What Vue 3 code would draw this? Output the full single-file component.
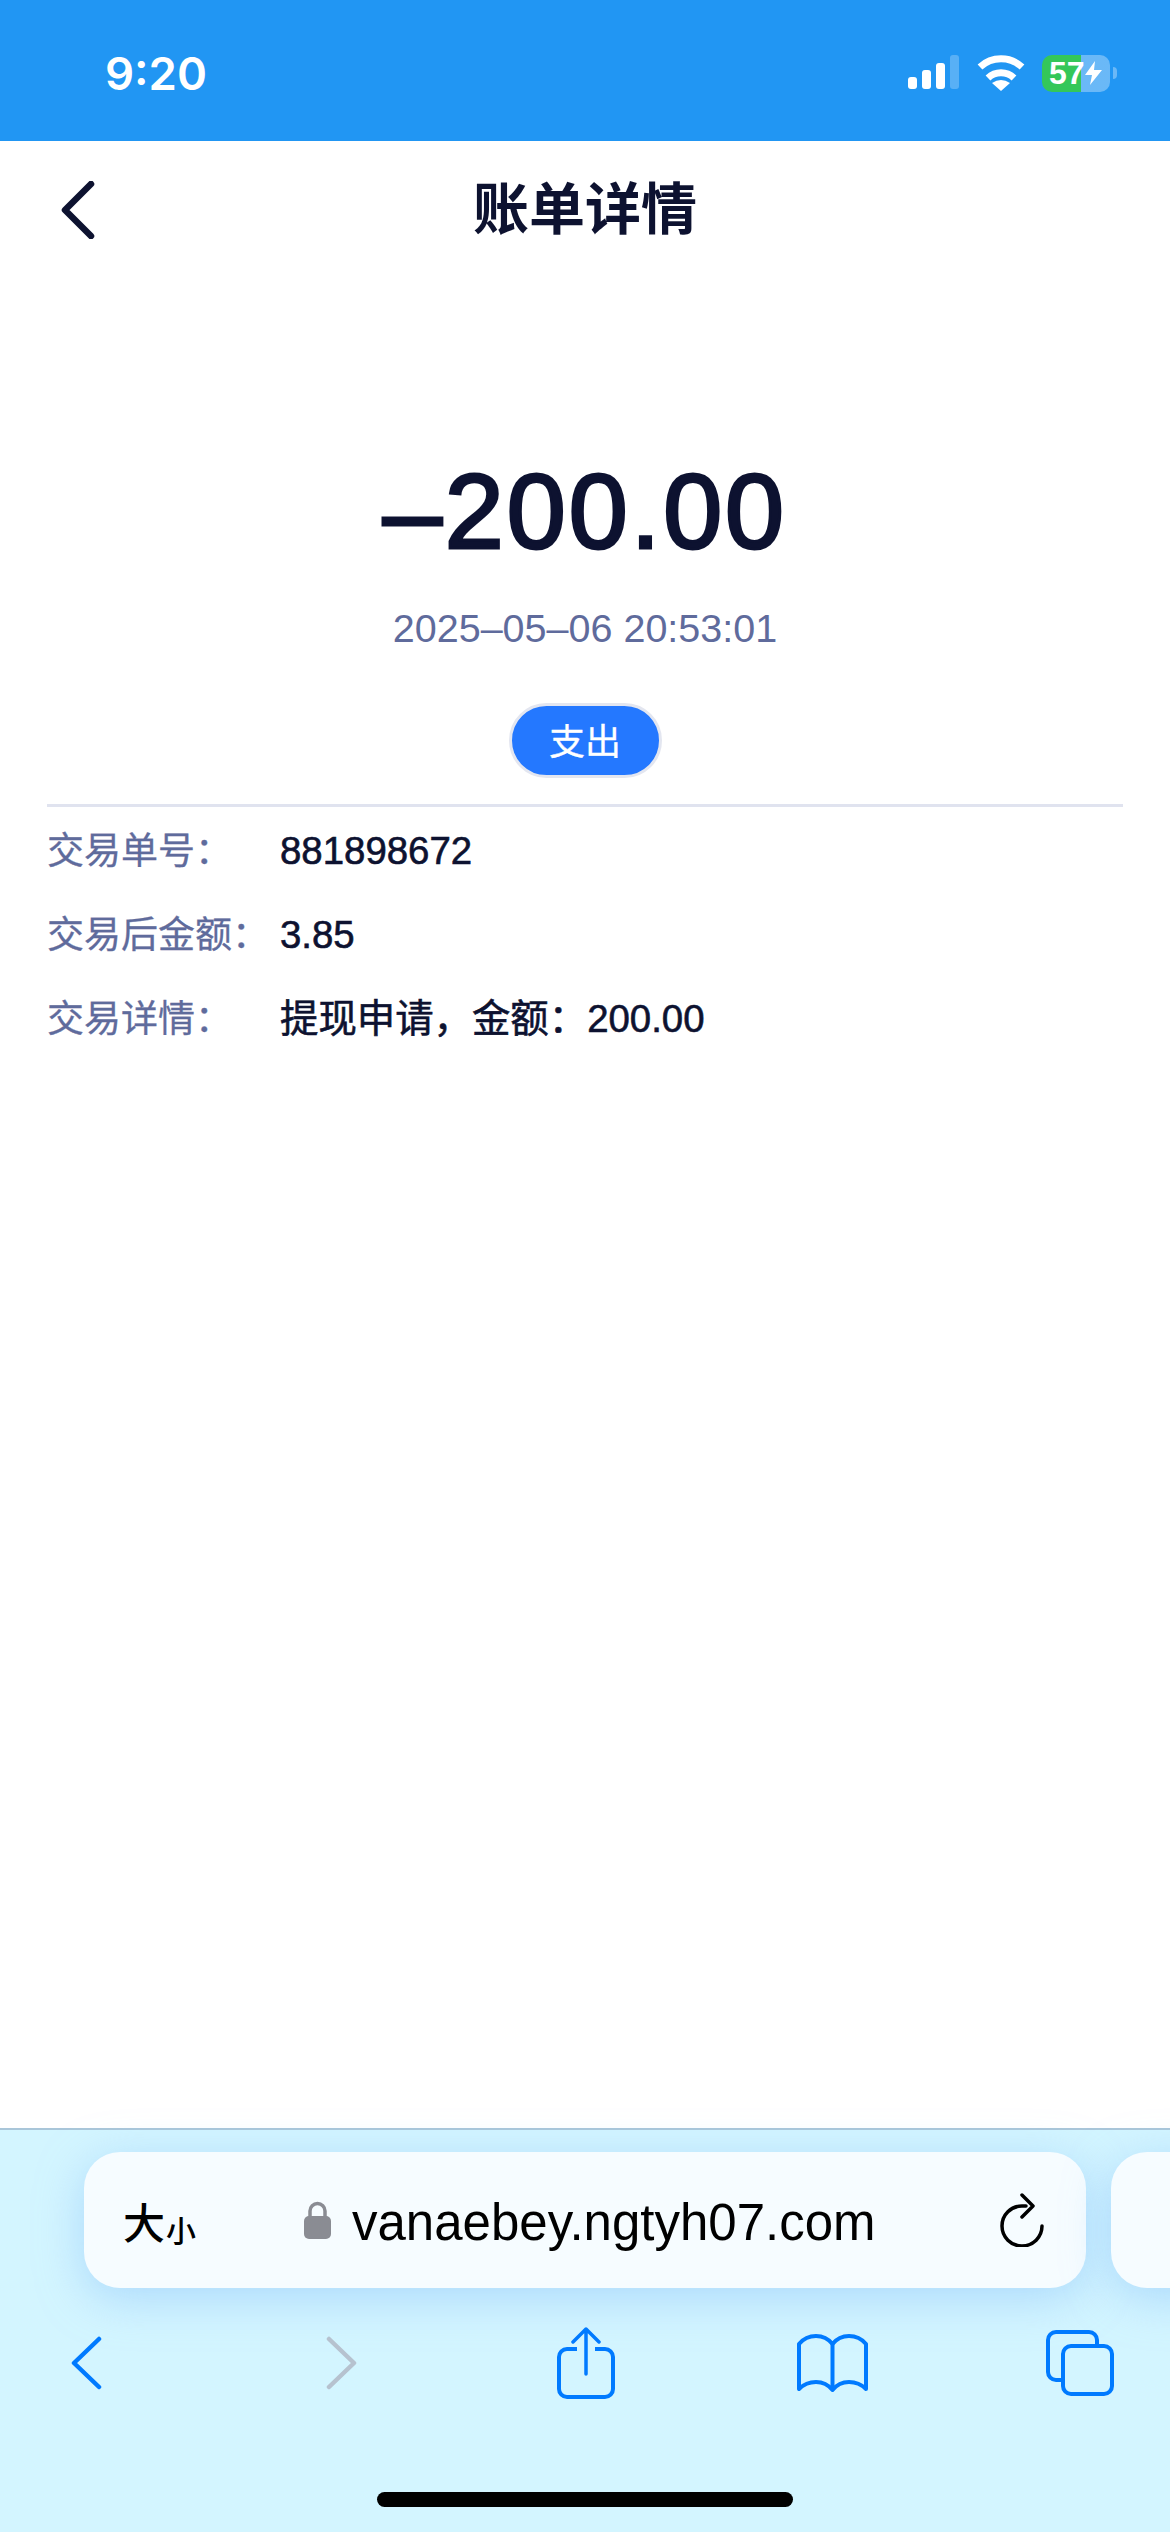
<script setup>
const rows = [
  { label: '交易单号：', value: '881898672' },
  { label: '交易后金额：', value: '3.85' },
  { label: '交易详情：', value: '提现申请，金额：200.00' }
]
</script>

<template>
  <div class="page">
    <div class="status-bar">
      <span class="time">9:20</span>
      <div class="status-icons">
        <svg class="signal" width="51" height="34" viewBox="0 0 51 34">
          <rect x="0" y="22" width="9" height="12" rx="3" fill="#fff" />
          <rect x="14" y="15" width="9" height="19" rx="3" fill="#fff" />
          <rect x="28" y="8" width="9" height="26" rx="3" fill="#fff" />
          <rect x="42" y="0" width="9" height="34" rx="3" fill="#fff" fill-opacity="0.25" />
        </svg>
        <svg class="wifi" width="48" height="36" viewBox="0 0 48 36">
          <path d="M3 12A31 31 0 0 1 45 12" fill="none" stroke="#fff" stroke-width="7" />
          <path d="M11 23A19 19 0 0 1 37 23" fill="none" stroke="#fff" stroke-width="7" />
          <path d="M15 28Q24 22 33 28L24 36Z" fill="#fff" />
        </svg>
        <div class="battery">
          <span class="battery-num">57</span>
          <svg width="17" height="24" viewBox="0 0 17 24">
            <path d="M10 0L0 14H7L5 24L17 9H9Z" fill="#fff" />
          </svg>
        </div>
        <div class="battery-nub"></div>
      </div>
    </div>

    <div class="nav">
      <svg class="nav-back" width="36" height="58" viewBox="0 0 36 58">
        <path d="M31 3L5 29L31 55" fill="none" stroke="#0d1230" stroke-width="6.500" stroke-linecap="round" stroke-linejoin="round" />
      </svg>
      <h1 class="nav-title">账单详情</h1>
    </div>

    <div class="summary">
      <div class="amount">–200.00</div>
      <div class="date">2025–05–06 20:53:01</div>
      <div class="pill">支出</div>
    </div>

    <div class="details">
      <div class="row" v-for="row in rows" :key="row.label">
        <span class="row-label">{{ row.label }}</span>
        <span class="row-value">{{ row.value }}</span>
      </div>
    </div>

    <div class="spacer"></div>

    <div class="browser">
      <div class="url-row">
        <div class="url-bar">
          <div class="text-size"><span class="big">大</span><span class="small">小</span></div>
          <svg class="lock" width="27" height="38" viewBox="0 0 27 38">
            <path d="M6 17V10a7.5 7.5 0 0 1 15 0V17" fill="none" stroke="#8a8c93" stroke-width="3.500" />
            <rect x="0" y="15" width="27" height="23" rx="5" fill="#8a8c93" />
          </svg>
          <span class="url">vanaebey.ngtyh07.com</span>
          <svg class="reload" width="46" height="54" viewBox="0 0 46 54">
            <path d="M27 13H23A20 20 0 1 0 43 33" fill="none" stroke="#000" stroke-width="3.500" stroke-linecap="round" />
            <path d="M23 2L34 13L23 24" fill="none" stroke="#000" stroke-width="3.500" stroke-linecap="round" stroke-linejoin="round" />
          </svg>
        </div>
        <div class="next-tab"></div>
      </div>
      <div class="tools">
        <svg class="tool-back" width="31" height="54" viewBox="0 0 31 54">
          <path d="M28 3L3 27L28 51" fill="none" stroke="#007aff" stroke-width="4.500" stroke-linecap="round" stroke-linejoin="round" />
        </svg>
        <svg class="tool-forward" width="31" height="54" viewBox="0 0 31 54">
          <path d="M3 3L28 27L3 51" fill="none" stroke="#b6c2cf" stroke-width="4.500" stroke-linecap="round" stroke-linejoin="round" />
        </svg>
        <svg class="tool-share" width="58" height="72" viewBox="0 0 58 72">
          <path d="M20 22H10A8 8 0 0 0 2 30V62A8 8 0 0 0 10 70H48A8 8 0 0 0 56 62V30A8 8 0 0 0 48 22H38" fill="none" stroke="#007aff" stroke-width="4" />
          <path d="M29 47V2M16 15L29 2L42 15" fill="none" stroke="#007aff" stroke-width="3.500" stroke-linecap="round" stroke-linejoin="round" />
        </svg>
        <svg class="tool-book" width="71" height="58" viewBox="0 0 71 58">
          <path d="M2 55V10C7 4 13 2 19 2C25 2 31.500 5 35.500 10C39.500 5 46 2 52 2C58 2 64 4 69 10V55C64 50 58 48 52 48C46 48 39.500 51 35.500 56C31.500 51 25 48 19 48C13 48 7 50 2 55Z" fill="none" stroke="#007aff" stroke-width="4" stroke-linejoin="round" />
          <path d="M35.500 10V56" fill="none" stroke="#007aff" stroke-width="4" />
        </svg>
        <svg class="tool-tabs" width="68" height="66" viewBox="0 0 68 66">
          <path d="M51 14V10A8 8 0 0 0 43 2H10A8 8 0 0 0 2 10V42A8 8 0 0 0 10 50H15" fill="none" stroke="#007aff" stroke-width="4" />
          <rect x="17" y="16" width="49" height="48" rx="8" fill="none" stroke="#007aff" stroke-width="4" />
        </svg>
      </div>
      <div class="home-bar"></div>
    </div>
  </div>
</template>

<style scoped>
.page {
  display: flex;
  flex-direction: column;
  width: 1170px;
  height: 2532px;
  overflow: hidden;
  background: #fff;
  font-family: "Liberation Sans", "Noto Sans CJK SC", sans-serif;
  color: #0d1230;
}

.status-bar {
  display: flex;
  justify-content: space-between;
  align-items: center;
  height: 141px;
  padding: 5px 53px 0 105px;
  box-sizing: border-box;
  background: #2196f3;
}

.time {
  color: #fff;
  font-family: Inter, sans-serif;
  font-size: 45.500px;
  font-weight: 600;
}

.status-icons {
  display: flex;
  align-items: center;
}

.signal {
  margin-top: -2px;
}

.wifi {
  margin-left: 18px;
}

.battery {
  display: flex;
  align-items: center;
  width: 68px;
  height: 37px;
  margin-left: 17px;
  padding-left: 7px;
  box-sizing: border-box;
  border-radius: 10px;
  background: linear-gradient(90deg, #34c759 57.5%, rgba(255, 255, 255, 0.33) 57.5%);
}

.battery-num {
  color: #fff;
  font-size: 32px;
  font-weight: 700;
  line-height: 1;
}

.battery-nub {
  width: 4px;
  height: 12px;
  margin-left: 3px;
  border-radius: 0 6px 6px 0;
  background: rgba(255, 255, 255, 0.33);
}

.nav {
  display: flex;
  align-items: center;
  position: relative;
  height: 138px;
  padding-left: 60px;
}

.nav-title {
  position: absolute;
  left: 0;
  right: 0;
  margin: 0;
  text-align: center;
  font-size: 56px;
  font-weight: 700;
  line-height: 1;
}

.summary {
  display: flex;
  flex-direction: column;
  align-items: center;
  padding-top: 167px;
}

.amount {
  font-size: 106px;
  letter-spacing: 3px;
  line-height: 130px;
  -webkit-text-stroke: 3px #0d1230;
}

.date {
  margin-top: 29px;
  color: #5f6b9c;
  font-size: 39.500px;
  line-height: 46px;
}

.pill {
  display: flex;
  justify-content: center;
  align-items: center;
  width: 153px;
  height: 75px;
  margin-top: 52px;
  padding-bottom: 4px;
  box-sizing: border-box;
  border: 3px solid #e3e6f0;
  border-radius: 38px;
  background: #2478ff;
  color: #fff;
  font-size: 36px;
  -webkit-text-stroke: 0.3px #fff;
}

.details {
  margin: 26px 47px 0;
  padding-top: 2px;
  border-top: 3px solid #e0e3ef;
}

.row {
  display: flex;
  align-items: baseline;
  height: 84px;
  font-size: 38.400px;
  line-height: 84px;
  -webkit-text-stroke: 0.6px #0d1230;
}

.row-label {
  width: 233px;
  flex-shrink: 0;
  color: #5f6b9c;
  font-size: 37px;
  white-space: nowrap;
  -webkit-text-stroke: 0.3px #5f6b9c;
}

.spacer {
  flex: 1;
}

.browser {
  height: 404px;
  box-sizing: border-box;
  border-top: 2px solid #a9c6d9;
  background: #d3f5ff;
}

.url-row {
  display: flex;
  gap: 25px;
  padding: 22px 0 0 84px;
}

.url-bar {
  display: flex;
  align-items: center;
  flex-shrink: 0;
  width: 1002px;
  height: 136px;
  padding: 0 41px 0 39px;
  box-sizing: border-box;
  border-radius: 36px;
  background: #f6fcff;
  box-shadow: 0 10px 45px rgba(140, 195, 250, 0.55);
  color: #000;
}

.text-size {
  display: flex;
  align-items: flex-end;
  width: 181px;
  flex-shrink: 0;
  font-weight: 500;
}

.big {
  font-size: 42px;
}

.small {
  margin-left: 1px;
  font-size: 30px;
}

.url {
  flex: 1;
  margin-left: 21px;
  padding-top: 5px;
  font-size: 51px;
  white-space: nowrap;
}

.next-tab {
  flex-shrink: 0;
  width: 200px;
  height: 136px;
  border-radius: 36px;
  background: #f6fcff;
  box-shadow: 0 10px 45px rgba(140, 195, 250, 0.55);
}

.tools {
  display: flex;
  align-items: center;
  height: 72px;
  margin-top: 39px;
  padding-left: 71px;
}

.tool-forward {
  margin-left: 224px;
}

.tool-share {
  margin-left: 200px;
}

.tool-book {
  margin-left: 182px;
}

.tool-tabs {
  margin-left: 178px;
}

.home-bar {
  width: 416px;
  height: 15px;
  margin: 93px auto 0;
  border-radius: 8px;
  background: #000;
}
</style>
